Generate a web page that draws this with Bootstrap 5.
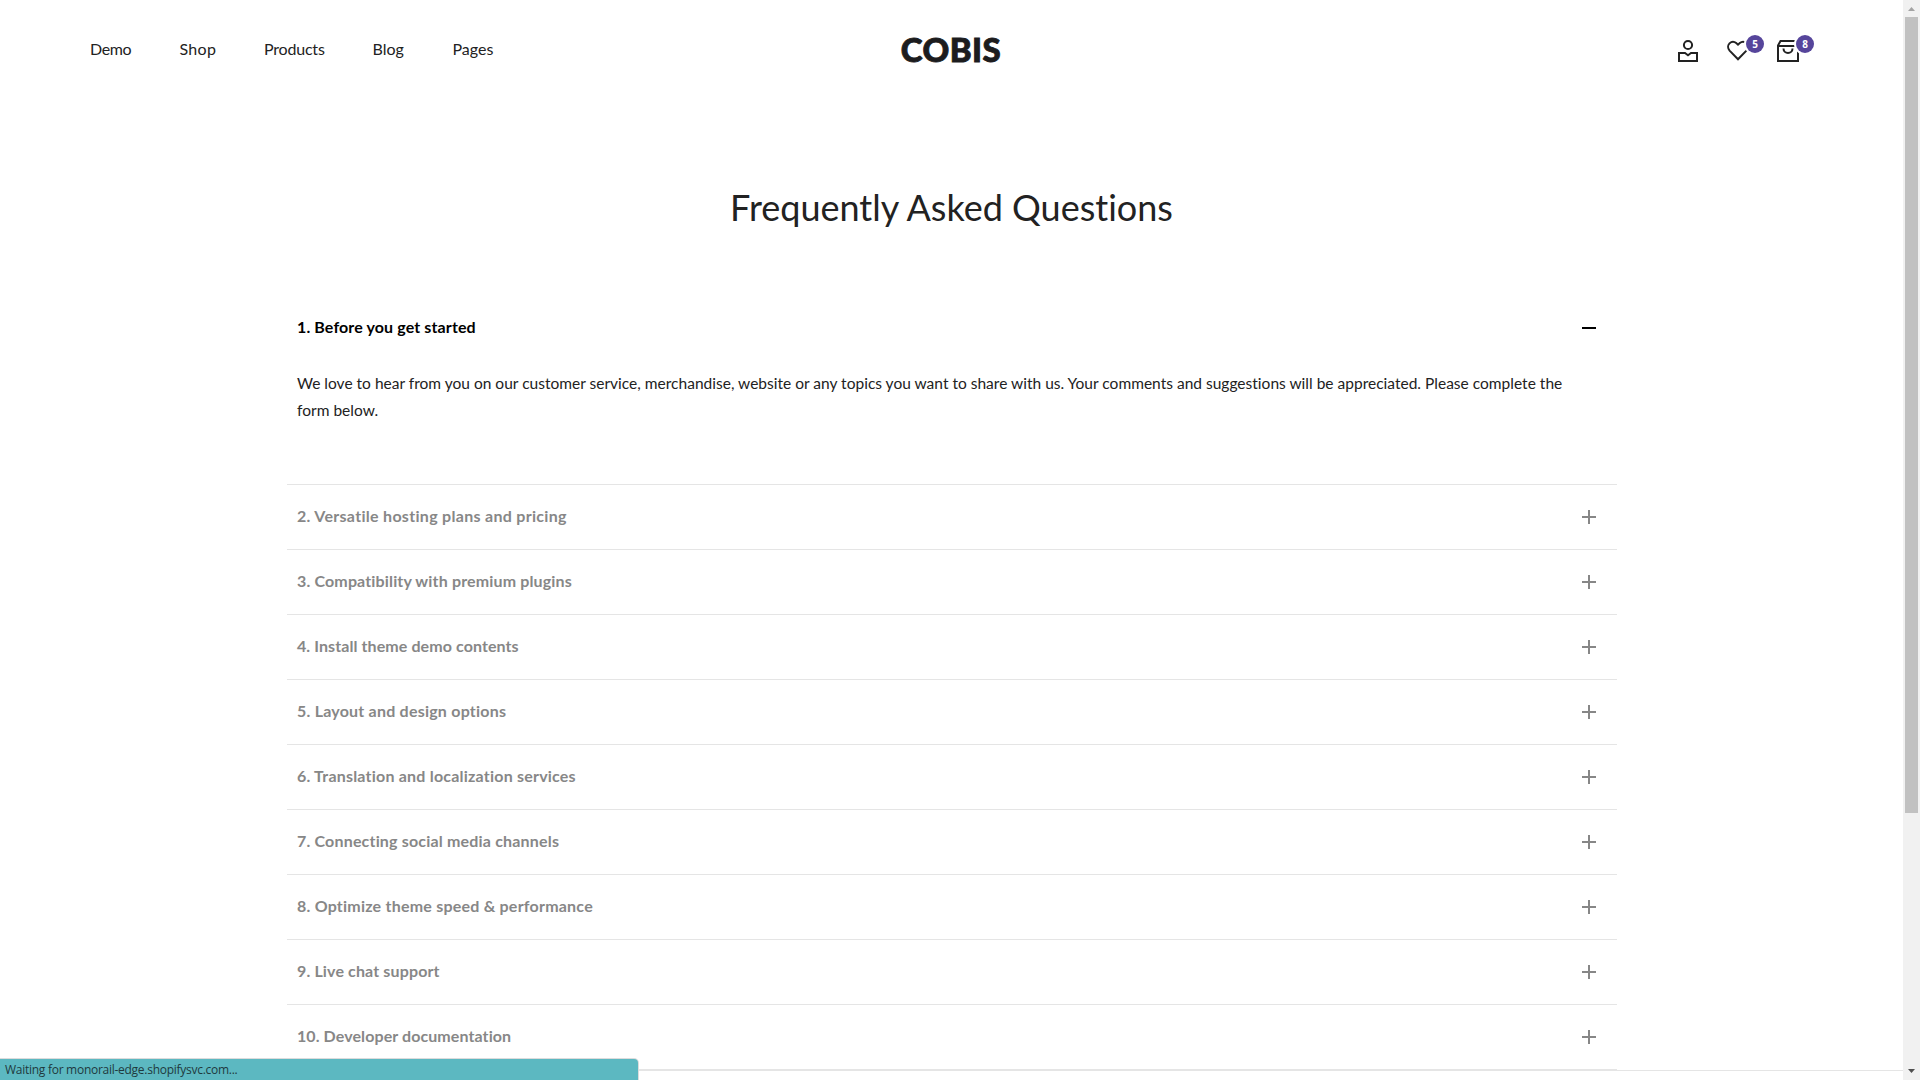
<!DOCTYPE html>
<html lang="en">
<head>
<meta charset="utf-8">
<title>Frequently Asked Questions - Cobis</title>
<link rel="stylesheet" href="https://cdn.jsdelivr.net/npm/bootstrap@5.3.0/dist/css/bootstrap.min.css">
<style>
html, body { height: 100%; overflow: hidden; }
body { font-family: Lato, "Liberation Sans", sans-serif; color: #222; background: #fff; font-variant-ligatures: none; }
.page-view { height: 1080px; overflow: hidden; }
.site-head { height: 102px; padding: 0 103px 0 90px; }
.main-menu { gap: 48px; padding-bottom: 5px; }
.main-menu .nav-link { padding: 0; color: #222; font-size: 16px; line-height: 24px; white-space: nowrap; }
.main-menu li:nth-child(1) { width: 41.5px; letter-spacing: -.35px; }
.main-menu li:nth-child(2) { width: 36.5px; letter-spacing: .3px; }
.main-menu li:nth-child(3) { width: 60.5px; letter-spacing: -.2px; }
.main-menu li:nth-child(4) { width: 32px; }
.side-col { flex: 1 1 0; }
.side-col.tools { gap: 26px; margin-right: -13px; padding-right: 13px; }
.brand-name { font-size: 33px; font-weight: 900; line-height: 40px; letter-spacing: .5px; color: #1c1c1e; -webkit-text-stroke: .9px #1c1c1e; padding-bottom: 5px; margin-left: 12px; }
.tool svg { display: block; fill: none; stroke: #222; stroke-width: 2; }
.count { left: 20px; top: -4px; width: 18px; height: 18px; font: 700 10px/18px "Open Sans", sans-serif; color: #fff; background: #56459b; box-shadow: 0 0 0 2px #fff; }
.page-title { font-size: 36px; line-height: 44px; font-weight: 400; margin: 83px 0 67px; color: #222; }
.faq { width: 1330px; margin-left: 287px; }
.faq-item { border-bottom: 1px solid #e5e5e5; }
.faq-head { height: 64px; padding: 0 21px 0 10px; font-size: 16px; font-weight: 700; color: #878787; }
.faq-item.open .faq-head { color: #000; }
.faq-head span { padding-bottom: 2px; }
.faq-head svg { display: block; fill: none; stroke: currentColor; stroke-width: 2; }
.faq-text { padding: 10px 40px 60px 10px; font-size: 15.5px; line-height: 27px; letter-spacing: .012px; color: #222; }
.faq-item:nth-child(1) span { letter-spacing: .12px; }
.faq-item:nth-child(2) span { letter-spacing: .3px; }
.faq-item:nth-child(3) span { letter-spacing: .15px; }
.faq-item:nth-child(4) span { letter-spacing: .09px; }
.faq-item:nth-child(5) span { letter-spacing: .22px; }
.faq-item:nth-child(6) span { letter-spacing: .21px; }
.faq-item:nth-child(7) span { letter-spacing: .18px; }
.faq-item:nth-child(8) span { letter-spacing: .22px; }
.faq-item:nth-child(9) span { letter-spacing: .14px; }
.faq-item:nth-child(10) span { letter-spacing: .09px; }
.foot { border-top: 1px solid #e5e5e5; height: 10px; }
.scroll-track { width: 17px; background: #f1f1f1; padding: 0 2px; }
.scroll-track svg { display: block; fill: #505050; width: 13px; height: 17px; }
.scroll-track svg.at-top { fill: #a3a3a3; }
.scroll-thumb { height: 796px; background: #c1c1c1; }
.load-status { left: 0; bottom: 0; width: 638px; height: 21px; padding-left: 5px; background: #5cb8c1; border-top-right-radius: 4px; box-shadow: 0 0 0 1px #dcdcdc; font: 400 12px/22px "Open Sans", sans-serif; letter-spacing: -.27px; color: #1f3a3e; }
</style>
</head>
<body>
<div class="page-view d-flex position-relative">
  <div class="flex-grow-1">
    <header class="site-head d-flex align-items-center">
      <nav class="side-col">
        <ul class="main-menu nav flex-nowrap">
          <li><a class="nav-link">Demo</a></li>
          <li><a class="nav-link">Shop</a></li>
          <li><a class="nav-link">Products</a></li>
          <li><a class="nav-link">Blog</a></li>
          <li><a class="nav-link">Pages</a></li>
        </ul>
      </nav>
      <div class="brand-name">COBIS</div>
      <div class="side-col tools d-flex justify-content-end">
        <a class="tool"><svg width="24" height="24"><circle cx="12" cy="6" r="4.1"/><path d="M3 22V14H9L12 16.2L15 14H21V22Z"/></svg></a>
        <a class="tool position-relative"><svg width="24" height="24"><path d="M12 20.2L3.6 11.6C1.6 9.3 1.6 6.3 3.5 4.4C5.6 2.4 8.3 2.5 10.2 4.1L12 5.7L13.8 4.1C15.7 2.5 18.4 2.4 20.5 4.4C22.4 6.3 22.4 9.3 20.4 11.6Z"/></svg><span class="count position-absolute rounded-circle text-center">5</span></a>
        <a class="tool position-relative"><svg width="24" height="24"><path d="M2 22V6.5L4.5 2H19.5L22 6.5V22ZM2 7H22M7.5 9.5C7.5 15.5 16.5 15.5 16.5 9.5"/></svg><span class="count position-absolute rounded-circle text-center">8</span></a>
      </div>
    </header>
    <main>
      <h1 class="page-title text-center">Frequently Asked Questions</h1>
      <div class="faq" id="faq">
        <section class="faq-item open">
          <div class="faq-head d-flex align-items-center justify-content-between"><span>1. Before you get started</span><svg width="14" height="14"><path d="M0 7H14"/></svg></div>
          <div class="faq-text">We love to hear from you on our customer service, merchandise, website or any topics you want to share with us. Your comments and suggestions will be appreciated. Please complete the<br>form below.</div>
        </section>
      </div>
    </main>
    <footer class="foot"></footer>
  </div>
  <div class="scroll-track d-flex flex-column">
    <svg class="at-top" viewBox="0 0 13 17"><path d="M3 11H10L6.5 7Z"/></svg>
    <div class="scroll-thumb"></div>
    <svg class="mt-auto" viewBox="0 0 13 17"><path d="M3 6H10L6.5 10Z"/></svg>
  </div>
  <div class="load-status position-absolute">Waiting for monorail-edge.shopifysvc.com...</div>
</div>
<script src="https://cdn.jsdelivr.net/npm/bootstrap@5.3.0/dist/js/bootstrap.bundle.min.js"></script>
<script>
const questions = [
  "2. Versatile hosting plans and pricing",
  "3. Compatibility with premium plugins",
  "4. Install theme demo contents",
  "5. Layout and design options",
  "6. Translation and localization services",
  "7. Connecting social media channels",
  "8. Optimize theme speed &amp; performance",
  "9. Live chat support",
  "10. Developer documentation"
];
document.getElementById("faq").insertAdjacentHTML("beforeend", questions.map(q =>
  `<section class="faq-item"><div class="faq-head d-flex align-items-center justify-content-between"><span>${q}</span><svg width="14" height="14"><path d="M0 7H14M7 0V14"/></svg></div></section>`
).join(""));
</script>
</body>
</html>
